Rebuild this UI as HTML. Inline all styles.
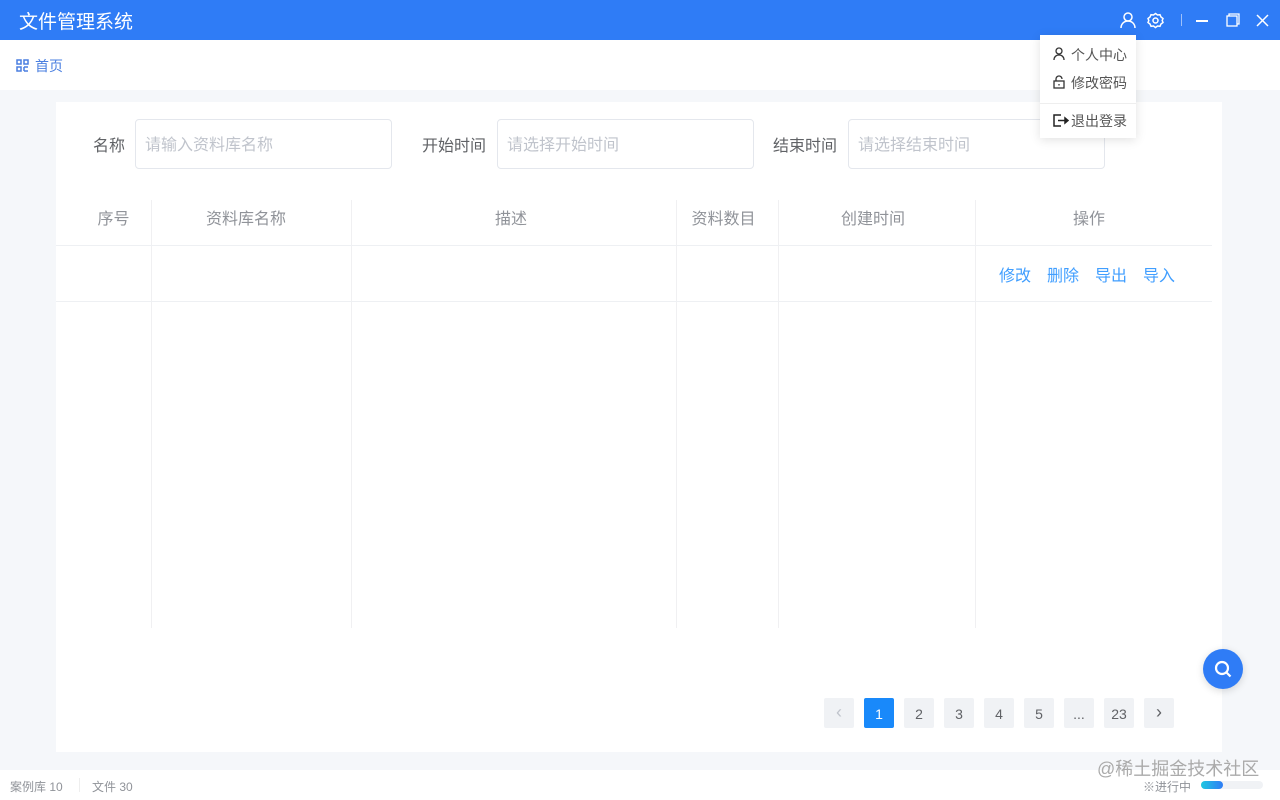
<!DOCTYPE html>
<html><head><meta charset="utf-8"><style>
*{margin:0;padding:0;box-sizing:border-box}
body{width:1280px;height:800px;position:relative;overflow:hidden;background:#f5f7fa;font-family:"Liberation Sans","Noto Sans CJK SC",sans-serif;color:#606266}
.abs{position:absolute}
.top{left:0;top:0;width:1280px;height:40px;background:#2f7cf6;color:#fff}
.nav{left:0;top:40px;width:1280px;height:50px;background:#fff}
.card{left:56px;top:102px;width:1166px;height:650px;background:#fff}
.inp{height:50px;border:1px solid #e4e7ed;border-radius:4px;color:#c0c4cc;font-size:16px;line-height:52px;padding-left:9px;top:119px}
.lbl{font-size:16px;color:#606266;top:132px}
.th{top:205px;font-size:16px;color:#909399;text-align:center}
.vl{width:1px;background:#f0f0f2;top:200px;height:428px}
.hl{height:1px;background:#eef0f3;left:56px;width:1156px}
.pg{top:698px;width:30px;height:30px;background:#f0f2f5;font-size:14px;color:#606266;text-align:center;line-height:32px;border-radius:2px}
.op{top:262px;font-size:16px;color:#409eff}
.foot{left:0;top:770px;width:1280px;height:30px;background:#fff;font-size:12px;color:#909399}
</style></head><body>
<div class="abs top">
  <div class="abs" style="left:19px;top:7px;font-size:19px">文件管理系统</div>
  <svg class="abs" style="left:1119px;top:11px" width="18" height="18" viewBox="0 0 18 18" fill="none" stroke="#fff" stroke-width="1.5"><circle cx="9" cy="6" r="4"/><path d="M2 17c0-4 3-7 7-7s7 3 7 7"/></svg>
  <svg class="abs" style="left:1147px;top:12px" width="17" height="17" viewBox="0 0 17 17" fill="none" stroke="#fff" stroke-width="1.5"><circle cx="8.5" cy="8.5" r="2.5"/><path d="M8.5 1.5l2 1.5 2.5-.3 1 2.3 2 1.5-.8 2 .8 2-2 1.5-1 2.3-2.5-.3-2 1.5-2-1.5-2.5.3-1-2.3-2-1.5.8-2-.8-2 2-1.5 1-2.3 2.5.3z"/></svg>
  <div class="abs" style="left:1181px;top:14px;width:1px;height:12px;background:#9ec1fa"></div>
  <div class="abs" style="left:1196px;top:20px;width:12px;height:1.5px;background:#fff"></div>
  <svg class="abs" style="left:1226px;top:13px" width="14" height="14" viewBox="0 0 14 14" fill="none" stroke="#fff" stroke-width="1.3"><rect x="1" y="3" width="10" height="10"/><path d="M3 3V1h10v10h-2"/></svg>
  <svg class="abs" style="left:1256px;top:14px" width="13" height="13" viewBox="0 0 13 13" stroke="#fff" stroke-width="1.5"><path d="M1 1l11 11M12 1L1 12"/></svg>
</div>
<div class="abs nav">
  <svg class="abs" style="left:16px;top:19px" width="13" height="13" viewBox="0 0 13 13" fill="none" stroke="#4a7fe0" stroke-width="1.5"><rect x="1" y="1" width="4" height="4"/><rect x="8" y="1" width="4" height="4"/><rect x="1" y="8" width="4" height="4"/><path d="M8 8h4M8 12h4M8 8v4"/></svg>
  <div class="abs" style="left:35px;top:16px;font-size:14px;color:#4a7fe0">首页</div>
</div>
<div class="abs card"></div>
<div class="abs lbl" style="left:93px">名称</div>
<div class="abs inp" style="left:135px;width:257px">请输入资料库名称</div>
<div class="abs lbl" style="left:422px">开始时间</div>
<div class="abs inp" style="left:497px;width:257px">请选择开始时间</div>
<div class="abs lbl" style="left:773px">结束时间</div>
<div class="abs inp" style="left:848px;width:257px">请选择结束时间</div>
<div class="abs vl" style="left:151px"></div><div class="abs vl" style="left:351px"></div><div class="abs vl" style="left:676px"></div><div class="abs vl" style="left:778px"></div><div class="abs vl" style="left:975px"></div>
<div class="abs hl" style="top:245px"></div><div class="abs hl" style="top:301px"></div>
<div class="abs th" style="left:56px;width:115px">序号</div>
<div class="abs th" style="left:151px;width:190px">资料库名称</div>
<div class="abs th" style="left:351px;width:320px">描述</div>
<div class="abs th" style="left:676px;width:95px">资料数目</div>
<div class="abs th" style="left:778px;width:190px">创建时间</div>
<div class="abs th" style="left:975px;width:228px">操作</div>
<div class="abs op" style="left:999px">修改</div><div class="abs op" style="left:1047px">删除</div><div class="abs op" style="left:1095px">导出</div><div class="abs op" style="left:1143px">导入</div>
<div class="abs pg" style="left:824px;color:#c0c4cc;font-size:18px;line-height:28px">‹</div>
<div class="abs pg" style="left:864px;background:#1989fa;color:#fff">1</div>
<div class="abs pg" style="left:904px">2</div><div class="abs pg" style="left:944px">3</div><div class="abs pg" style="left:984px">4</div><div class="abs pg" style="left:1024px">5</div><div class="abs pg" style="left:1064px">...</div><div class="abs pg" style="left:1104px">23</div>
<div class="abs pg" style="left:1144px;font-size:18px;line-height:28px">›</div>
<div class="abs" style="left:1203px;top:649px;width:40px;height:40px;border-radius:50%;background:#2f7cf6;box-shadow:0 2px 8px rgba(0,0,0,.15)"><svg style="position:absolute;left:10px;top:10px" width="20" height="20" viewBox="0 0 20 20" fill="none" stroke="#fff" stroke-width="2.2"><circle cx="9" cy="9" r="6"/><path d="M13.5 13.5l4 4"/></svg></div>
<div class="abs foot">
  <div class="abs" style="left:10px;top:8px">案例库 10</div>
  <div class="abs" style="left:79px;top:8px;width:1px;height:14px;background:#eee"></div>
  <div class="abs" style="left:92px;top:8px">文件 30</div>
  <div class="abs" style="left:1143px;top:8px">※进行中</div>
  <div class="abs" style="left:1201px;top:11px;width:62px;height:8px;background:#f0f2f5;border-radius:4px"><div style="width:22px;height:8px;border-radius:4px;background:linear-gradient(90deg,#1ec8e0,#2f7cf6)"></div></div>
</div>
<div class="abs" style="left:1097px;top:755px;font-size:18px;color:#aaa">@稀土掘金技术社区</div>
<div class="abs" style="left:1040px;top:35px;width:96px;height:103px;background:#fff;box-shadow:0 2px 10px rgba(0,0,0,.12);font-size:14px;color:#555">
  <svg class="abs" style="left:13px;top:12px" width="12" height="13" viewBox="0 0 12 13" fill="none" stroke="#333" stroke-width="1.3"><circle cx="6" cy="4" r="3"/><path d="M1 13c0-3 2-5 5-5s5 2 5 5"/></svg>
  <div class="abs" style="left:31px;top:10px">个人中心</div>
  <svg class="abs" style="left:13px;top:40px" width="12" height="14" viewBox="0 0 12 14" fill="none" stroke="#333" stroke-width="1.3"><rect x="1" y="6" width="10" height="7"/><path d="M3 6V4a3 3 0 0 1 6 0"/><path d="M6 9v1.5"/></svg>
  <div class="abs" style="left:31px;top:38px">修改密码</div>
  <div class="abs" style="left:0;top:68px;width:96px;height:1px;background:#eee"></div>
  <svg class="abs" style="left:13px;top:79px" width="16" height="13" viewBox="0 0 16 13" fill="none" stroke="#222" stroke-width="1.5"><path d="M8 1H1v11h7"/><path d="M5 6.5h8"/><path d="M12 4l3 2.5-3 2.5z" fill="#222"/></svg>
  <div class="abs" style="left:31px;top:76px">退出登录</div>
</div>
</body></html>
